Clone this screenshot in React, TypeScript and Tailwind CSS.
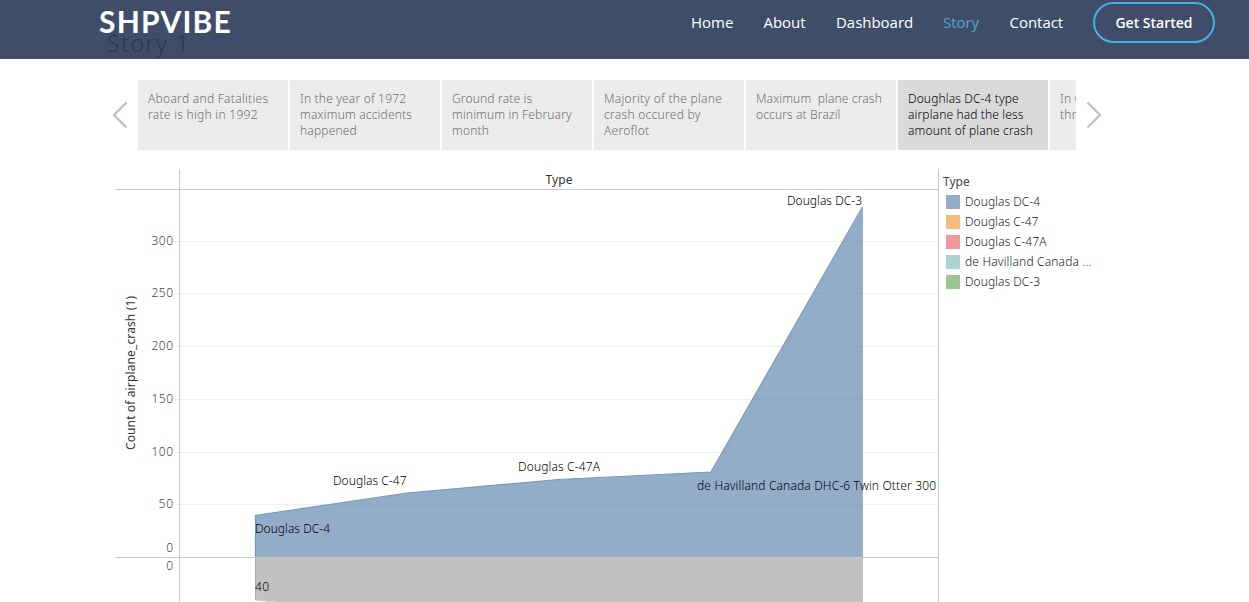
import React from "react";

const links = [
  { label: "Home", width: "w-[42.5px]" },
  { label: "About", width: "w-[42.5px]" },
  { label: "Dashboard", width: "w-[77px]" },
  { label: "Story", width: "w-[36.5px]", active: true },
  { label: "Contact", width: "w-[53.5px]" },
];

const points = [
  { lines: ["Aboard and Fatalities", "rate is high in 1992"], spacing: "tracking-[0.28px]" },
  { lines: ["In the year of 1972", "maximum accidents", "happened"], spacing: "tracking-[0.18px]" },
  { lines: ["Ground rate is", "minimum in February", "month"], spacing: "tracking-[0.16px]" },
  { lines: ["Majority of the plane", "crash occured by", "Aeroflot"], spacing: "tracking-[0.28px]" },
  { lines: ["Maximum  plane crash", "occurs at Brazil"], spacing: "tracking-[0.13px]" },
  { lines: ["Doughlas DC-4 type", "airplane had the less", "amount of plane crash"], spacing: "tracking-[0.13px]" },
  { lines: ["In Canada", "three"], spacing: "tracking-[0.2px]" },
];
const activePoint = 5;

const legend = [
  { label: "Douglas DC-4", color: "bg-[#95adc9]", spacing: "tracking-[0.04px]" },
  { label: "Douglas C-47", color: "bg-[#f7bb80]", spacing: "tracking-[0.04px]" },
  { label: "Douglas C-47A", color: "bg-[#ee9a9b]", spacing: "tracking-[0.1px]" },
  { label: "de Havilland Canada ...", color: "bg-[#add3d0]", spacing: "tracking-[0.16px]" },
  { label: "Douglas DC-3", color: "bg-[#9bc692]", spacing: "tracking-[0.04px]" },
];

const ticks = [
  { value: 300, y: 241 },
  { value: 250, y: 293 },
  { value: 200, y: 346 },
  { value: 150, y: 399 },
  { value: 100, y: 452 },
  { value: 50, y: 504 },
];

const marks = [
  { label: "Douglas DC-4", x: 255, y: 533, width: 75 },
  { label: "Douglas C-47", x: 333, y: 485, width: 73.5 },
  { label: "Douglas C-47A", x: 518, y: 471, width: 82 },
  { label: "de Havilland Canada DHC-6 Twin Otter 300", x: 697, y: 490, width: 239 },
  { label: "Douglas DC-3", x: 787, y: 205, width: 75 },
  { label: "40", x: 255, y: 591, width: 14 },
];

function Header() {
  return (
    <header className="relative flex h-[59px] items-start bg-[#3f4d69] pl-[99px] pr-[34px] font-['Open_Sans',sans-serif]">
      <span className="absolute left-[107px] top-[29px] whitespace-nowrap font-['Noto_Sans',sans-serif] text-[23px] font-light leading-[28px] tracking-[1.5px] text-[#2a3854]">
        Story 1
      </span>
      <a className="relative mt-[3px] font-['Lato',sans-serif] text-[30px] font-bold leading-[36px] tracking-[1.2px] text-white">
        SHPVIBE
      </a>
      <nav className="ml-auto mt-[2px] flex h-[41px] items-center gap-[30px] text-[15px] font-medium text-white">
        {links.map((l) => (
          <a
            key={l.label}
            className={`${l.width} whitespace-nowrap tracking-[-0.03px] ${l.active ? "text-[#47a8d8]" : ""}`}
          >
            {l.label}
          </a>
        ))}
        <a className="flex h-[41px] w-[122px] items-center justify-center rounded-full border-2 border-[#47b2e4] text-[14px] font-semibold">
          Get Started
        </a>
      </nav>
    </header>
  );
}

function Arrow({ d }: { d: string }) {
  return (
    <svg width="16" height="28" viewBox="0 0 16 28" fill="none" stroke="#c0c0c0" strokeWidth="2.4">
      <path d={d} />
    </svg>
  );
}

function StoryPoints() {
  return (
    <div className="mt-[21px] flex h-[70px] items-center pl-[112px]">
      <Arrow d="M14.5 1.5 L2 14 L14.5 26.5" />
      <div className="ml-[10px] mr-[10px] flex h-[70px] w-[938px] gap-[2px] overflow-hidden">
        {points.map((point, i) => (
          <div
            key={i}
            className={`w-[150px] shrink-0 pl-[10px] pt-[11px] text-[12px] leading-[16px] ${point.spacing} ${
              i === activePoint ? "bg-[#dadada] text-black" : "bg-[#ececec] text-[#6c6c6c]"
            }`}
          >
            {point.lines.map((line) => (
              <p key={line} className="whitespace-pre">
                {line}
              </p>
            ))}
          </div>
        ))}
      </div>
      <Arrow d="M1.5 1.5 L14 14 L1.5 26.5" />
    </div>
  );
}

function Chart() {
  return (
    <svg width="824" height="433" viewBox="115 169 824 433" className="shrink-0 text-[12px] font-light">
      {ticks.map((t) => (
        <g key={t.value}>
          <path d={`M175 ${t.y + 0.5} H938`} stroke="#f0f0f0" />
          <text x={173} y={t.y + 4} textAnchor="end" textLength={t.value === 50 ? 14.5 : 21.5} fill="#444">
            {t.value}
          </text>
        </g>
      ))}
      <path d="M255 515.5 L407 493 L559 479.5 L711 472 L863 207 V557 H255 Z" fill="#4e79a7" fillOpacity="0.61" />
      <path d="M255.5 557 V515.5 L407 493 L559 479.5 L711 472 L862.5 207" fill="none" stroke="#7399c1" strokeWidth="1.2" />
      <path d="M255 558 H863 V602 H275 L255 600 Z" fill="#c1c1c1" />
      <path d="M255.5 558 V600" fill="none" stroke="#adadad" />
      <path d="M255 600 L275 602" fill="none" stroke="#cfcfcf" />
      <path d="M115 189.5 H938 M115 557.5 H938 M179.5 169 V602 M938.5 169 V602" stroke="#c8c8c8" fill="none" />
      <text x={173} y={552} textAnchor="end" fill="#444">0</text>
      <text x={173} y={570} textAnchor="end" fill="#444">0</text>
      <text x={545.5} y={184} textLength={27} fill="#333" className="font-normal">Type</text>
      <text transform="translate(135 450) rotate(-90)" textLength={154} fill="#333" className="font-normal">
        Count of airplane_crash (1)
      </text>
      {marks.map((m) => (
        <text key={m.label} x={m.x} y={m.y} textLength={m.width} fill="#000">
          {m.label}
        </text>
      ))}
    </svg>
  );
}

function Legend() {
  return (
    <aside className="pl-[4px] pt-[3px] text-[12px] leading-[20px] text-[#222222]">
      <h2 className="font-normal text-[#444444]">Type</h2>
      <ul>
        {legend.map((item) => (
          <li key={item.label} className={`flex h-[20px] items-center pl-[3px] ${item.spacing}`}>
            <span className={`mr-[5px] h-[14px] w-[14px] ${item.color}`} />
            {item.label}
          </li>
        ))}
      </ul>
    </aside>
  );
}

export default function App() {
  return (
    <div className="h-[602px] overflow-hidden bg-white font-['Noto_Sans',sans-serif] font-light">
      <Header />
      <StoryPoints />
      <main className="mt-[19px] flex pl-[115px]">
        <Chart />
        <Legend />
      </main>
    </div>
  );
}
